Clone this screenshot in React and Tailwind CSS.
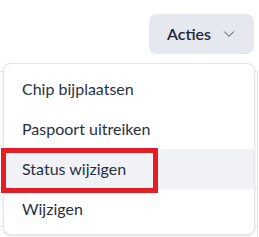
import React from "react";

const items = ["Chip bijplaatsen", "Paspoort uitreiken", "Status wijzigen", "Wijzigen"];

export default function App() {
  return (
    <div className="relative flex flex-col w-[259px] h-[237px] overflow-hidden bg-white font-['Lato',sans-serif]">
      <div className="flex justify-end pt-[14px] pr-[5px]">
        <button className="flex items-center gap-[11px] h-[40px] w-[105px] pl-[18px] rounded-[8px] bg-[#e5e8ee] text-[#1e293b] text-[16px] font-semibold">
          Acties
          <svg width="14" height="14" viewBox="0 0 24 24" fill="none" stroke="#334155" strokeWidth="1.6" strokeLinecap="round" strokeLinejoin="round">
            <path d="M4 8l8 8 8-8" />
          </svg>
        </button>
      </div>

      {/* table behind the menu */}
      <div className="mt-[17px] w-[258px] flex-1 border-t border-r border-[#e5e7eb]">
        <div className="h-[116px] border-b border-[#e5e7eb]" />
        <div className="h-[39px] border-b border-[#e5e7eb]" />
      </div>

      <div className="absolute left-[3px] top-[63px] w-[252px] rounded-[8px] border border-[#e5e7eb] bg-white py-[5px] shadow-sm">
        {items.map((label, i) => (
          <div
            key={label}
            className={`relative flex items-center h-[40px] pl-[18px] text-[16px] text-[#27303f] ${
              i === 2 ? "bg-[#f1f2f6]" : ""
            }`}
          >
            {label}
            {i === 2 && (
              <div className="absolute left-[-3px] top-[-1px] w-[157px] h-[45px] border-[5px] border-[#e31e24]" />
            )}
          </div>
        ))}
      </div>
    </div>
  );
}
